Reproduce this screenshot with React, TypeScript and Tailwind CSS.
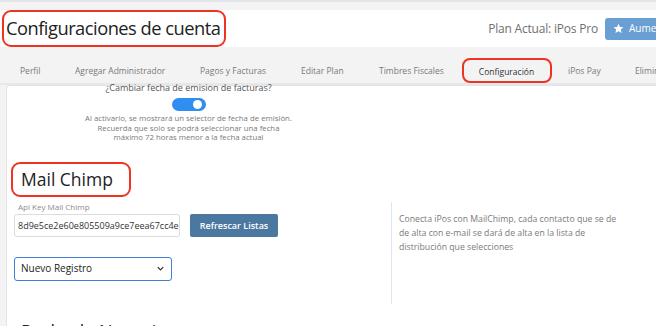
import React from "react";

const font = { fontFamily: '"Open Sans", "Noto Sans", sans-serif' };

export default function App() {
  const tabs = [
    { label: "Perfil", w: "w-[55px]" },
    { label: "Agregar Administrador", w: "w-[125px]" },
    { label: "Pagos y Facturas", w: "w-[101px]" },
    { label: "Editar Plan", w: "w-[78px]" },
    { label: "Timbres Fiscales", w: "w-[86px]" },
  ];
  return (
    <div className="w-[656px] h-[326px] overflow-hidden bg-[#f3f3f3]" style={font}>
      {/* top strip */}
      <div className="h-[10px] border-t-2 border-[#e4e5e8] bg-[#f3f3f3]" />
      {/* header */}
      <div className="h-[37px] bg-white flex items-center justify-between pl-[6px] whitespace-nowrap overflow-hidden">
        <div className="relative">
          <div className="absolute left-[-4px] right-[-6px] top-[-9px] bottom-[-9px] border-2 border-[#ee3322] rounded-[9px]" />
          <h1 className="text-[18.3px] leading-none text-[#222] tracking-[-0.5px]">Configuraciones de cuenta</h1>
        </div>
        <div className="flex items-center shrink-0">
          <span className="text-[12px] text-[#6f6f6f] mr-[7px] tracking-[-0.2px]">Plan Actual: iPos Pro</span>
          <div className="h-[22px] w-[51px] shrink-0 bg-[#6a9fd3] rounded-l-[3px] flex items-center pl-[8px] gap-[5px] overflow-hidden">
            <svg className="shrink-0" width="11" height="11" viewBox="0 0 24 24" fill="white"><path d="M12 1.5l3.2 7 7.6.8-5.7 5.1 1.6 7.5L12 18l-6.7 3.9 1.6-7.5L1.2 9.3l7.6-.8z" /></svg>
            <span className="text-[10px] text-white">Aumentar Plan</span>
          </div>
        </div>
      </div>
      {/* tabs */}
      <div className="h-[38px] flex items-end whitespace-nowrap border-b-2 border-[#e6e8eb] pl-[20px] overflow-hidden">
        {tabs.map((t) => (
          <div key={t.label} className={`${t.w} shrink-0 h-[24px] flex items-center text-[8.5px] text-[#7a7a7a]`}>
            {t.label}
          </div>
        ))}
        <div className="relative w-[83px] shrink-0 h-[24px] flex items-center justify-center text-[8.5px] text-[#333] border-b-2 border-[#333] mb-[-2px]">
          <div className="absolute left-[-3px] right-[-4px] top-[-3px] bottom-0 border-2 border-[#ee3322] rounded-[8px]" />
          Configuración
        </div>
        <div className="w-[87px] shrink-0 h-[24px] flex items-center text-[8.5px] text-[#7a7a7a] pl-[20px]">iPos Pay</div>
        <div className="shrink-0 h-[24px] flex items-center text-[8.5px] text-[#7a7a7a]">Eliminar Cuenta</div>
      </div>
      {/* panel */}
      <div className="ml-[6px] bg-white border-l border-t border-[#e3e3e3] rounded-tl-[4px] h-[260px]">
        <div className="w-[363px] flex flex-col items-center mt-[-3px]">
          <p className="text-[9px] leading-[10px] text-[#555]">¿Cambiar fecha de emision de facturas?</p>
          <div className="mt-[5px] w-[34px] h-[13px] rounded-full bg-[#2f8ef0] flex items-center justify-end pr-[4px]">
            <div className="w-[9px] h-[9px] rounded-full bg-white" />
          </div>
          <p className="mt-[3px] text-[7.8px] leading-[9.6px] text-[#7a7a7a] text-center">
            Al activarlo, se mostrará un selector de fecha de emisión.
            <br />
            Recuerda que solo se podrá seleccionar una fecha
            <br />
            máximo 72 horas menor a la fecha actual
          </p>
        </div>
        <div className="mt-[19px] ml-[4px] w-[120px] h-[35px] border-2 border-[#ee3322] rounded-[9px] flex items-center pl-[8px]">
          <span className="text-[17.5px] leading-none text-[#222]">Mail Chimp</span>
        </div>
        <div className="flex mt-[5px]">
          <div className="w-[384px] pl-[7px]">
            <p className="text-[8px] leading-[10px] text-[#8a8a8a] pl-[4px]">Api Key Mail Chimp</p>
            <div className="flex mt-[2px] gap-[10px]">
              <div className="w-[166px] h-[23px] border border-[#dcdcdc] rounded-[3px] flex items-center px-[3px] overflow-hidden whitespace-nowrap">
                <span className="text-[9px] text-[#333]">8d9e5ce2e60e805509a9ce7eea67cc4e</span>
              </div>
              <div className="w-[88px] h-[23px] bg-[#4a78a1] rounded-[2px] flex items-center justify-center">
                <span className="text-[9px] text-white font-semibold">Refrescar Listas</span>
              </div>
            </div>
            <div className="mt-[20px] w-[158px] h-[24px] border border-[#3f7fdc] rounded-[3px] flex items-center justify-between px-[6px]">
              <span className="text-[10px] text-[#222]">Nuevo Registro</span>
              <svg width="9" height="9" viewBox="0 0 10 10" fill="none" stroke="#333" strokeWidth="1.4"><path d="M2 3.5l3 3 3-3" /></svg>
            </div>
          </div>
          <div className="border-l border-[#dfe6ee] h-[102px] pl-[7px] pt-[10px]">
            <p className="text-[8.7px] leading-[14px] text-[#7a7a7a] w-[230px]">
              Conecta iPos con MailChimp, cada contacto que se de
              <br />
              de alta con e-mail se dará de alta en la lista de
              <br />
              distribución que selecciones
            </p>
          </div>
        </div>
        <div className="mt-[16px] pl-[14px]">
          <span className="text-[18px] leading-none text-[#222]">Packs de Negocio</span>
        </div>
      </div>
    </div>
  );
}
